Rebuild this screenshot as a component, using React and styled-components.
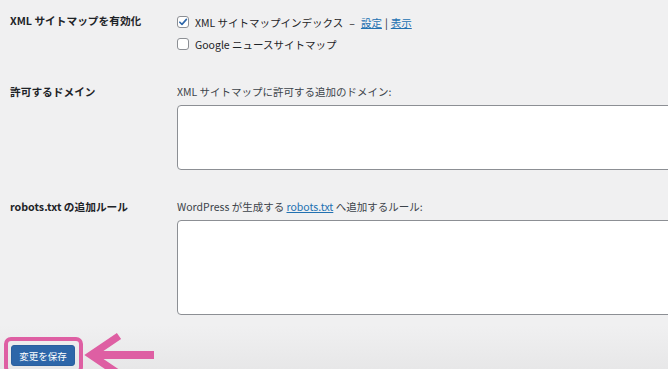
import React from "react";
import styled, { createGlobalStyle } from "styled-components";

const Global = createGlobalStyle`
  html, body {
    margin: 0;
    padding: 0;
    height: 100%;
    overflow: hidden;
  }
  body {
    background: linear-gradient(180deg, #f0f0f1 0px, #f0f0f1 325px, #e7e7e8 369px);
    font-family: "Noto Sans CJK JP", "Noto Sans", sans-serif;
    color: #1d2327;
  }
`;

const Page = styled.div`
  padding: 11px 0 0 10px;
  width: 658px;
  overflow: hidden;
`;

const Rows = styled.div`
  display: flex;
  flex-direction: column;
  gap: 29px;
`;

const Row = styled.div`
  display: grid;
  grid-template-columns: 167px 1fr;
  align-items: start;
`;

const Label = styled.div`
  font-size: 10.7px;
  line-height: 16px;
  font-weight: 700;
  color: #1d2327;
  padding-top: ${(p) => p.$offset || 0}px;
  white-space: nowrap;
`;

const Field = styled.div`
  display: flex;
  flex-direction: column;
  min-width: 0;
`;

const CheckLine = styled.label`
  display: flex;
  align-items: center;
  height: 22px;
  gap: 6px;
  font-size: 10.5px;
  color: #1d2327;
  white-space: nowrap;
`;

const Box = styled.span`
  width: 12px;
  height: 12px;
  box-sizing: border-box;
  border: 1px solid #8c8f94;
  border-radius: 3px;
  background: #fff;
  display: flex;
  align-items: center;
  justify-content: center;
  flex: none;
`;

const Link = styled.a`
  color: #2271b1;
  text-decoration: underline;
  text-underline-offset: 1px;
`;

const Sep = styled.span`
  color: #1d2327;
  margin: 0 ${(p) => p.$space}px;
`;

const Desc = styled.div`
  font-size: 10.5px;
  line-height: 16px;
  color: #3c434a;
  white-space: nowrap;
  margin-bottom: 5px;
`;

const Area = styled.div`
  width: calc(100% + 40px);
  height: ${(p) => p.$h}px;
  box-sizing: border-box;
  border: 1px solid #8c8f94;
  border-radius: 4px;
  background: #fff;
`;

const Submit = styled.div`
  display: flex;
  align-items: flex-start;
  margin: 22px 0 0 -6px;
`;

const Highlight = styled.div`
  border: 4px solid #de5fa3;
  border-radius: 7px;
  padding: 4px 4px 4px 3px;
`;

const SaveButton = styled.button`
  width: 64px;
  height: 21px;
  box-sizing: border-box;
  background: #2d66a9;
  border: 1px solid #2a5f9e;
  border-radius: 3px;
  color: #fff;
  font-family: "Noto Sans CJK JP", sans-serif;
  font-size: 9.5px;
  padding: 0;
  display: flex;
  align-items: center;
  justify-content: center;
`;

const Arrow = styled.svg`
  margin: -7px 0 0 0;
  flex: none;
`;

function Check({ checked }) {
  return (
    <Box>
      {checked && (
        <svg width="10" height="10" viewBox="0 0 10 10">
          <path d="M1.8 5.2 L4 7.4 L8.4 2.4" fill="none" stroke="#2d66a9" strokeWidth="1.6" strokeLinecap="round" strokeLinejoin="round" />
        </svg>
      )}
    </Box>
  );
}

export default function App() {
  return (
    <>
      <Global />
      <Page>
        <Rows>
          <Row>
            <Label $offset={2}>XML サイトマップを有効化</Label>
            <Field>
              <CheckLine>
                <Check checked />
                <span>
                  XML サイトマップインデックス<Sep $space={6}>–</Sep>
                  <Link href="#">設定</Link>
                  <Sep $space={3}>|</Sep>
                  <Link href="#">表示</Link>
                </span>
              </CheckLine>
              <CheckLine>
                <Check />
                <span>Google ニュースサイトマップ</span>
              </CheckLine>
            </Field>
          </Row>
          <Row>
            <Label>許可するドメイン</Label>
            <Field>
              <Desc>XML サイトマップに許可する追加のドメイン:</Desc>
              <Area $h={65} />
            </Field>
          </Row>
          <Row>
            <Label>robots.txt の追加ルール</Label>
            <Field>
              <Desc>
                WordPress が生成する <Link href="#">robots.txt</Link> へ追加するルール:
              </Desc>
              <Area $h={95} />
            </Field>
          </Row>
        </Rows>
        <Submit>
          <Highlight>
            <SaveButton>変更を保存</SaveButton>
          </Highlight>
          <Arrow width="72" height="52" viewBox="0 0 72 52">
            <polyline points="36,6 8,25 36,44" fill="none" stroke="#de5fa3" strokeWidth="7.5" strokeLinejoin="miter" strokeMiterlimit="10" />
            <line x1="10" y1="25" x2="71" y2="25" stroke="#de5fa3" strokeWidth="8" />
          </Arrow>
        </Submit>
      </Page>
    </>
  );
}
